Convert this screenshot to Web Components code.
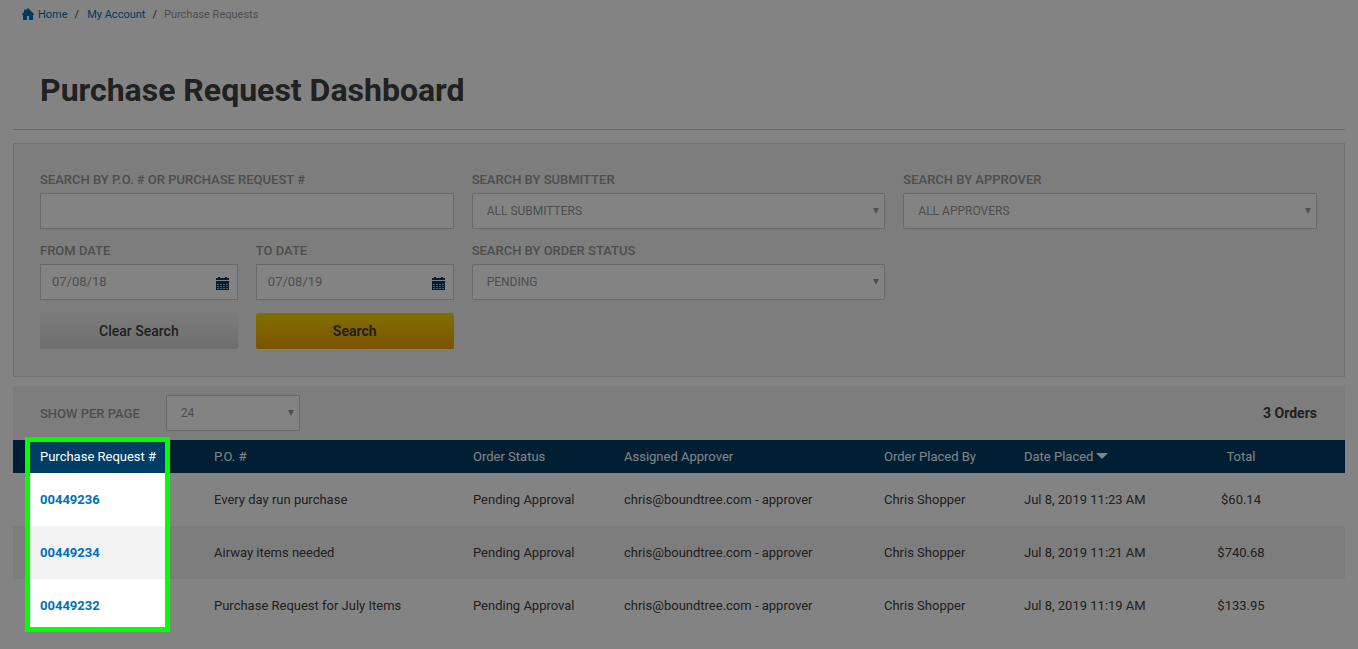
<!DOCTYPE html>
<html lang="en">
<head>
<meta charset="utf-8">
<title>Purchase Request Dashboard</title>
<style>
  html { background: #fff; }
  body {
    margin: 0;
    font: 13px/19px Roboto, "Liberation Sans", sans-serif;
    color: #404040;
    --brand: #0070b9;
    --navy: #003e66;
    --muted: #999;
    --line: #ccc;
    --panel: #f3f3f3;
  }
</style>
</head>
<body>
<purchase-dashboard></purchase-dashboard>

<script>
const define = (name, html, setup) => {
  const template = document.createElement('template');
  template.innerHTML = html;
  customElements.define(name, class extends HTMLElement {
    constructor() {
      super();
      this.attachShadow({ mode: 'open' }).append(template.content.cloneNode(true));
    }
    connectedCallback() {
      if (setup && !this.ready) { this.ready = true; setup(this, this.shadowRoot); }
    }
  });
};

const fieldStyle = `
  :host { display: block; min-width: 0; }
  label { display: block; margin-bottom: 4px; font-weight: 500; color: var(--muted); text-transform: uppercase; }
  .box { display: grid; align-items: center; }
  .box > * { grid-area: 1 / 1; }
  input, select {
    box-sizing: border-box; width: 100%; height: 36px; margin: 0;
    border: 1px solid var(--line); background: #fff;
    font: inherit; color: var(--muted); outline: 0;
  }
  svg { justify-self: end; pointer-events: none; }`;

define('crumb-trail', `
  <style>
    :host { display: block; }
    nav { display: flex; align-items: center; gap: 7px; font-size: 11px; line-height: 16px; }
    a { display: flex; align-items: center; gap: 4px; color: var(--brand); text-decoration: none; }
    .account { margin-left: 1px; }
    .here { color: var(--muted); }
    svg { margin-bottom: 2px; }
  </style>
  <nav aria-label="Breadcrumb">
    <a href="#home"><svg width="12" height="12" viewBox="0 0 12 12" fill="currentColor" aria-hidden="true"><path d="M6 0 12 6v1h-1v5H7V8H5v4H1V7H0V6l2-2V1.500h1.500v1z"/></svg>Home</a>
    <span>/</span>
    <a class="account" href="#account">My Account</a>
    <span>/</span>
    <span class="here">Purchase Requests</span>
  </nav>`);

define('text-field', `
  <style>${fieldStyle} input { padding: 0 12px; }</style>
  <label for="control"></label>
  <div class="box"><input id="control" type="text"></div>`,
  (host, root) => { root.querySelector('label').textContent = host.getAttribute('label'); });

define('date-field', `
  <style>${fieldStyle}
    input { padding: 0 32px 2px 11px; }
    svg { margin: 3px 9px 0 0; color: var(--navy); }
  </style>
  <label for="control"></label>
  <div class="box"><input id="control" type="text">
    <svg width="13" height="13" viewBox="0 0 13 13" aria-hidden="true">
      <path fill="currentColor" d="M0 1h2V0h2v1h5V0h2v1h2v2H0zM0 4h13v9H0z"/>
      <path stroke="#fff" stroke-opacity=".6" stroke-dasharray="2 1" d="M1 7.500h11M1 9.500h11M1 11.500h11"/>
    </svg>
  </div>`,
  (host, root) => {
    root.querySelector('label').textContent = host.getAttribute('label');
    root.querySelector('input').value = host.getAttribute('value');
  });

define('select-field', `
  <style>${fieldStyle}
    :host([inline]) { display: flex; align-items: center; gap: 26px; }
    :host([inline]) label { margin: 0; }
    :host([inline]) .box { width: 134px; }
    select { appearance: none; border-radius: 2px; padding: 0 24px 0 14px; font-size: 12px; }
    svg { margin-right: 6px; color: var(--muted); }
  </style>
  <label for="control"></label>
  <div class="box"><select id="control"><option></option></select>
    <svg width="6" height="6" viewBox="0 0 6 6" fill="currentColor" aria-hidden="true"><path d="M0 0h6L3 6z"/></svg>
  </div>`,
  (host, root) => {
    root.querySelector('label').textContent = host.getAttribute('label');
    root.querySelector('option').textContent = host.getAttribute('value');
  });

define('action-button', `
  <style>
    :host { display: block; }
    button {
      display: block; width: 100%; height: 36px; border: 0; border-radius: 2px; padding: 0;
      font: 500 14px/20px Roboto, "Liberation Sans", sans-serif; color: #404040;
      background: linear-gradient(#f0f0f0, #d8d8d8);
    }
    :host([primary]) button { font-weight: 700; background: linear-gradient(#fcd800, #f5a300); }
  </style>
  <button type="button"><slot></slot></button>`);

define('search-panel', `
  <style>
    :host { display: block; border: 1px solid #d8d8d8; background: var(--panel); padding: 26px 27px 27px 26px; }
    form { display: grid; grid-template-columns: repeat(6, minmax(0, 1fr)); column-gap: 18px; row-gap: 12px; }
    .wide { grid-column: span 2; }
    .actions { grid-column: span 2; display: grid; grid-template-columns: 1fr 1fr; gap: 18px; padding-top: 1px; }
  </style>
  <form>
    <text-field class="wide" label="Search by P.O. # or Purchase Request #"></text-field>
    <select-field class="wide" label="Search by Submitter" value="ALL SUBMITTERS"></select-field>
    <select-field class="wide" label="Search by Approver" value="ALL APPROVERS"></select-field>
    <date-field label="From Date" value="07/08/18"></date-field>
    <date-field label="To Date" value="07/08/19"></date-field>
    <select-field class="wide" label="Search by Order Status" value="PENDING"></select-field>
    <span class="wide"></span>
    <div class="actions">
      <action-button>Clear Search</action-button>
      <action-button primary>Search</action-button>
    </div>
  </form>`);

define('results-bar', `
  <style>
    :host { display: flex; align-items: center; justify-content: space-between; padding: 9px 28px 9px 27px; background: var(--panel); }
    strong { font-size: 14px; font-weight: 700; }
  </style>
  <select-field inline label="Show per page" value="24"></select-field>
  <strong>3 Orders</strong>`);

define('spot-light', `
  <style>
    :host { display: block; box-sizing: border-box; border: 5px solid #0f0; box-shadow: 0 0 0 9999px rgba(0, 0, 0, .485); pointer-events: none; }
  </style>`);

define('order-table', `
  <style>
    :host { display: block; position: relative; }
    table { width: 100%; table-layout: fixed; border-collapse: collapse; }
    th, td { padding: 0 9px 0 11px; text-align: left; white-space: nowrap; }
    th { height: 33px; background: var(--navy); color: #fff; font-weight: 400; }
    td { height: 53px; }
    tr > :first-child { padding-left: 27px; }
    tr > :last-child { padding-right: 37px; text-align: center; }
    tbody tr:nth-child(even) { background: var(--panel); }
    a { color: var(--brand); font-weight: 700; text-decoration: none; }
    th svg { margin-left: 3px; vertical-align: 2px; }
    spot-light { position: absolute; top: -3px; bottom: 0; left: 12px; width: 145px; z-index: 1; }
  </style>
  <table>
    <colgroup><col width="190"><col width="259"><col width="151"><col width="260"><col width="140"><col width="150"><col width="182"></colgroup>
    <thead><tr>
      <th>Purchase Request #</th><th>P.O. #</th><th>Order Status</th><th>Assigned Approver</th><th>Order Placed By</th>
      <th>Date Placed<svg width="12" height="6" viewBox="0 0 12 6" fill="currentColor" aria-hidden="true"><path d="M0 0h12L6 6z"/></svg></th>
      <th>Total</th>
    </tr></thead>
    <tbody></tbody>
  </table>
  <spot-light></spot-light>`,
  (host, root) => {
    const orders = [
      ['00449236', 'Every day run purchase', '11:23', '$60.14'],
      ['00449234', 'Airway items needed', '11:21', '$740.68'],
      ['00449232', 'Purchase Request for July Items', '11:19', '$133.95']
    ];
    root.querySelector('tbody').innerHTML = orders.map(([id, po, time, total]) => `<tr>
      <td><a href="#${id}">${id}</a></td><td>${po}</td><td>Pending Approval</td>
      <td>chris@boundtree.com - approver</td><td>Chris Shopper</td>
      <td>Jul 8, 2019 ${time} AM</td><td>${total}</td></tr>`).join('');
  });

define('purchase-dashboard', `
  <style>
    :host { display: block; padding: 7px 13px 17px; }
    crumb-trail { padding-left: 9px; }
    h1 { margin: 47px 0 0; padding: 0 27px 19px; border-bottom: 1px solid var(--line); font-size: 32px; line-height: 40px; font-weight: 700; }
    search-panel { margin: 13px 0 9px; }
  </style>
  <crumb-trail></crumb-trail>
  <main>
    <h1>Purchase Request Dashboard</h1>
    <search-panel></search-panel>
    <results-bar></results-bar>
    <order-table></order-table>
  </main>`);
</script>
</body>
</html>
